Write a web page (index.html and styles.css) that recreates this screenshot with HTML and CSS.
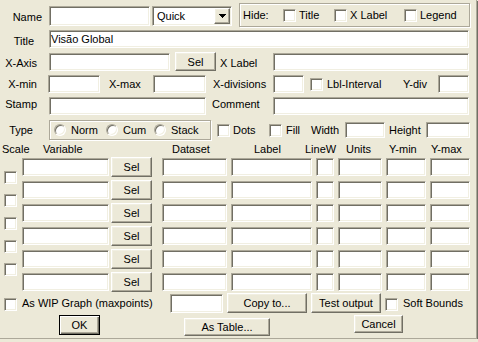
FILE: index.html
```html
<!DOCTYPE html>
<html>
<head>
<meta charset="utf-8">
<link rel="stylesheet" href="styles.css">
</head>
<body>
<div class="dlg">
  <div class="row r1">
    <span class="lbl l-name">Name</span>
    <div class="tx w101"></div>
    <div class="combo">
      <span class="combo-t">Quick</span>
      <span class="btn combo-b"><svg width="7" height="4" viewBox="0 0 7 4" shape-rendering="crispEdges"><path d="M0 0h7v1H0zM1 1h5v1H1zM2 2h3v1H2zM3 3h1v1H3z" fill="#000"/></svg></span>
    </div>
    <div class="grp hide">
      <span class="hide-l">Hide:</span>
      <span class="chk c-title"><span class="box"></span>Title</span>
      <span class="chk c-xl"><span class="box"></span>X Label</span>
      <span class="chk"><span class="box"></span>Legend</span>
    </div>
  </div>

  <div class="row r2">
    <span class="lbl l-title">Title</span>
    <div class="tx w420">Visão Global</div>
  </div>

  <div class="row r3">
    <span class="lbl l-xaxis">X-Axis</span>
    <div class="tx w121"></div>
    <div class="btn sel1">Sel</div>
    <span class="lbl l-xlabel">X Label</span>
    <div class="tx w196"></div>
  </div>

  <div class="row r4">
    <span class="lbl l-xmin">X-min</span>
    <div class="tx w52"></div>
    <span class="lbl l-xmax">X-max</span>
    <div class="tx w53"></div>
    <span class="lbl l-xdiv">X-divisions</span>
    <div class="tx w31"></div>
    <span class="chk c-lbl"><span class="box"></span>Lbl-Interval</span>
    <span class="lbl l-ydiv">Y-div</span>
    <div class="tx w31"></div>
  </div>

  <div class="row r5">
    <span class="lbl l-stamp">Stamp</span>
    <div class="tx w157"></div>
    <span class="lbl l-comment">Comment</span>
    <div class="tx w196"></div>
  </div>

  <div class="row r6">
    <span class="lbl l-type">Type</span>
    <div class="grp typegrp">
      <span class="rad r-norm"><span class="circ"></span>Norm</span>
      <span class="rad r-cum"><span class="circ"></span>Cum</span>
      <span class="rad"><span class="circ"></span>Stack</span>
    </div>
    <span class="chk c-dots"><span class="box"></span>Dots</span>
    <span class="chk c-fill"><span class="box"></span>Fill</span>
    <span class="lbl l-width">Width</span>
    <div class="tx w40 h16"></div>
    <span class="lbl l-height">Height</span>
    <div class="tx w44 h16"></div>
  </div>

  <div class="row head">
    <span class="h-scale">Scale</span>
    <span class="h-var">Variable</span>
    <span class="h-ds">Dataset</span>
    <span class="h-label">Label</span>
    <span class="h-lw">LineW</span>
    <span class="h-units">Units</span>
    <span class="h-ymin">Y-min</span>
    <span class="h-ymax">Y-max</span>
  </div>

  <div class="grid">
    <span class="cell-scale"><span class="box"></span></span><div class="tx w87"></div><div class="btn w41">Sel</div><div class="tx w65"></div><div class="tx w81"></div><div class="tx w18"></div><div class="tx w44"></div><div class="tx w40"></div><div class="tx w40"></div>
    <span class="cell-scale"><span class="box"></span></span><div class="tx w87"></div><div class="btn w41">Sel</div><div class="tx w65"></div><div class="tx w81"></div><div class="tx w18"></div><div class="tx w44"></div><div class="tx w40"></div><div class="tx w40"></div>
    <span class="cell-scale"><span class="box"></span></span><div class="tx w87"></div><div class="btn w41">Sel</div><div class="tx w65"></div><div class="tx w81"></div><div class="tx w18"></div><div class="tx w44"></div><div class="tx w40"></div><div class="tx w40"></div>
    <span class="cell-scale"><span class="box"></span></span><div class="tx w87"></div><div class="btn w41">Sel</div><div class="tx w65"></div><div class="tx w81"></div><div class="tx w18"></div><div class="tx w44"></div><div class="tx w40"></div><div class="tx w40"></div>
    <span class="cell-scale"><span class="box"></span></span><div class="tx w87"></div><div class="btn w41">Sel</div><div class="tx w65"></div><div class="tx w81"></div><div class="tx w18"></div><div class="tx w44"></div><div class="tx w40"></div><div class="tx w40"></div>
    <span class="cell-scale"></span><div class="tx w87"></div><div class="btn w41">Sel</div><div class="tx w65"></div><div class="tx w81"></div><div class="tx w18"></div><div class="tx w44"></div><div class="tx w40"></div><div class="tx w40"></div>
  </div>

  <div class="row bot">
    <span class="chk c-wip"><span class="box"></span>As WIP Graph (maxpoints)</span>
    <div class="tx w53 h19"></div>
    <div class="btn b-copy">Copy to...</div>
    <div class="btn b-test">Test output</div>
    <span class="chk c-soft"><span class="box"></span>Soft Bounds</span>
  </div>

  <div class="row fin">
    <div class="btn b-ok">OK</div>
    <div class="btn b-table">As Table...</div>
    <div class="btn b-cancel">Cancel</div>
  </div>
</div>
</body>
</html>
```

FILE: styles.css
```css
html, body {
  margin: 0;
  padding: 0;
  background: #ece9d8;
}
body {
  font-family: "Liberation Sans", Arial, sans-serif;
  font-size: 11px;
  color: #000;
}
.dlg {
  box-sizing: border-box;
  width: 477px;
  height: 339px;
  padding-top: 3px;
  border-right: 1px solid #aca899;
  border-bottom: 1px solid #aca899;
  box-shadow: 1px 1px 0 #716f64;
  overflow: hidden;
}
.row {
  display: flex;
  align-items: center;
  white-space: nowrap;
}
.lbl {
  flex: none;
  box-sizing: border-box;
  align-self: flex-start;
  white-space: nowrap;
}

/* sunken text field */
.tx {
  flex: none;
  box-sizing: border-box;
  height: 18px;
  background: #fff;
  border: 1px solid;
  border-color: #aca899 #fff #fff #aca899;
  box-shadow: inset 1px 1px 0 #716f64, inset -1px -1px 0 #f1efe2;
  padding: 0 1px;
  line-height: 16px;
  overflow: hidden;
  white-space: nowrap;
}
.h16 { height: 16px; line-height: 14px; }
.h19 { height: 19px; }

/* raised button */
.btn {
  flex: none;
  box-sizing: border-box;
  display: flex;
  align-items: center;
  justify-content: center;
  background: #ece9d8;
  border: 1px solid;
  border-color: #fff #716f64 #716f64 #fff;
  box-shadow: inset -1px -1px 0 #aca899, inset 1px 1px 0 #f1efe2;
  height: 20px;
  white-space: nowrap;
}

/* checkbox */
.box {
  flex: none;
  box-sizing: border-box;
  width: 13px;
  height: 13px;
  background: #fff;
  border: 1px solid;
  border-color: #aca899 #fff #fff #aca899;
  box-shadow: inset 1px 1px 0 #716f64, inset -1px -1px 0 #f1efe2;
  margin-right: 4px;
}
.chk {
  flex: none;
  display: flex;
  align-items: center;
  box-sizing: border-box;
}

/* radio */
.rad {
  flex: none;
  display: flex;
  align-items: center;
}
.circ {
  flex: none;
  box-sizing: border-box;
  width: 12px;
  height: 12px;
  border-radius: 50%;
  background: #fff;
  border: 1px solid;
  border-color: #aca899 #fff #fff #aca899;
  box-shadow: inset 1px 1px 0 #716f64, inset -1px -1px 0 #f1efe2;
  margin-right: 5px;
}

/* etched group */
.grp {
  flex: none;
  box-sizing: border-box;
  display: flex;
  align-items: center;
  border: 1px solid #aca899;
  box-shadow: inset 1px 1px 0 #fff, 1px 1px 0 #fff;
}

/* widths */
.w18 { width: 18px; }
.w31 { width: 31px; }
.w40 { width: 40px; }
.w41 { width: 41px; }
.w44 { width: 44px; }
.w52 { width: 52px; }
.w53 { width: 53px; }
.w65 { width: 65px; }
.w81 { width: 81px; }
.w87 { width: 87px; }
.w101 { width: 101px; }
.w121 { width: 121px; }
.w157 { width: 157px; }
.w196 { width: 196px; }
.w420 { width: 420px; }

/* row 1 */
.r1 { height: 24px; align-items: flex-start; }
.l-name { width: 49px; padding-right: 7px; text-align: right; line-height: 22px; margin-top: 3px; }
.r1 .tx { height: 20px; margin-top: 3px; }
.combo {
  flex: none;
  box-sizing: border-box;
  width: 80px;
  height: 20px;
  margin: 3px 0 0 2px;
  padding: 1px;
  display: flex;
  background: #fff;
  border: 1px solid;
  border-color: #aca899 #fff #fff #aca899;
  box-shadow: inset 1px 1px 0 #716f64, inset -1px -1px 0 #f1efe2;
}
.combo-t { flex: 1; padding-left: 3px; line-height: 16px; }
.combo-b { width: 16px; height: 16px; }
.hide { width: 231px; height: 24px; margin-left: 7px; padding-left: 3px; }
.hide-l { width: 40px; flex: none; }
.hide .box { margin-right: 3px; }
.c-title { width: 51px; }
.c-xl { width: 70px; }

/* row 2 */
.r2 { margin-top: 3px; height: 18px; }
.l-title { width: 49px; padding-right: 15px; text-align: right; line-height: 22px; }

/* row 3 */
.r3 { margin-top: 4px; height: 20px; }
.r3 .lbl { line-height: 23px; }
.l-xaxis { width: 49px; padding-right: 12px; text-align: right; }
.sel1 { width: 41px; height: 19px; margin-left: 5px; align-self: flex-start; }
.l-xlabel { width: 53px; margin-left: 4px; }

/* row 4 */
.r4 { margin-top: 3px; height: 18px; }
.r4 .lbl { line-height: 18px; }
.l-xmin { width: 48px; padding-right: 11px; text-align: right; }
.l-xmax { width: 53px; padding-left: 9px; }
.l-xdiv { width: 67px; padding-left: 7px; }
.c-lbl { width: 93px; margin-left: 6px; }
.l-ydiv { width: 35px; }

/* row 5 */
.r5 { margin-top: 4px; height: 18px; }
.r5 .lbl { line-height: 14px; }
.l-stamp { width: 49px; padding-right: 12px; text-align: right; }
.l-comment { width: 67px; padding-left: 6px; }

/* row 6 */
.r6 { margin-top: 5px; height: 20px; }
.r6 .lbl { line-height: 20px; }
.l-type { width: 49px; padding-right: 16px; text-align: right; }
.typegrp { width: 162px; height: 20px; padding-left: 4px; }
.r-norm { width: 52px; }
.r-cum { width: 48px; }
.c-dots { width: 52px; margin-left: 6px; }
.c-dots .box { margin-right: 3px; }
.c-fill { width: 42px; }
.l-width { width: 34px; }
.l-height { width: 41px; padding-left: 4px; }

/* header */
.head { margin-top: 3px; height: 12px; line-height: 12px; }
.head span { flex: none; }
.h-scale { width: 41px; margin-left: 2px; }
.h-var { width: 129px; }
.h-ds { width: 82px; }
.h-label { width: 51px; }
.h-lw { width: 41px; }
.h-units { width: 43px; }
.h-ymin { width: 42px; }

/* grid */
.grid {
  margin-top: 2px;
  display: grid;
  grid-template-columns: 22px 89px 51px 69px 85px 22px 48px 44px 40px;
  grid-auto-rows: 20px;
  row-gap: 3px;
  align-items: center;
}
.cell-scale {
  align-self: start;
  display: block;
  height: 20px;
}
.cell-scale .box {
  display: block;
  margin: 14px 0 0 4px;
}

/* bottom row */
.bot { margin-top: 1px; height: 20px; }
.c-wip { width: 166px; margin-left: 4px; }
.c-wip .box, .c-soft .box { margin-right: 5px; margin-top: 3px; }
.b-copy { width: 80px; margin-left: 4px; }
.b-test { width: 70px; margin-left: 4px; }
.c-soft { margin-left: 4px; }

/* final row */
.fin { margin-top: 2px; height: 21px; align-items: flex-start; }
.b-ok {
  width: 41px;
  margin-left: 59px;
  border: 1px solid #000;
  box-shadow: inset 1px 1px 0 #fff, inset -1px -1px 0 #716f64, inset -2px -2px 0 #aca899;
}
.b-table { width: 86px; height: 18px; margin: 3px 0 0 84px; }
.b-cancel { width: 49px; height: 18px; margin-left: 84px; }
```
